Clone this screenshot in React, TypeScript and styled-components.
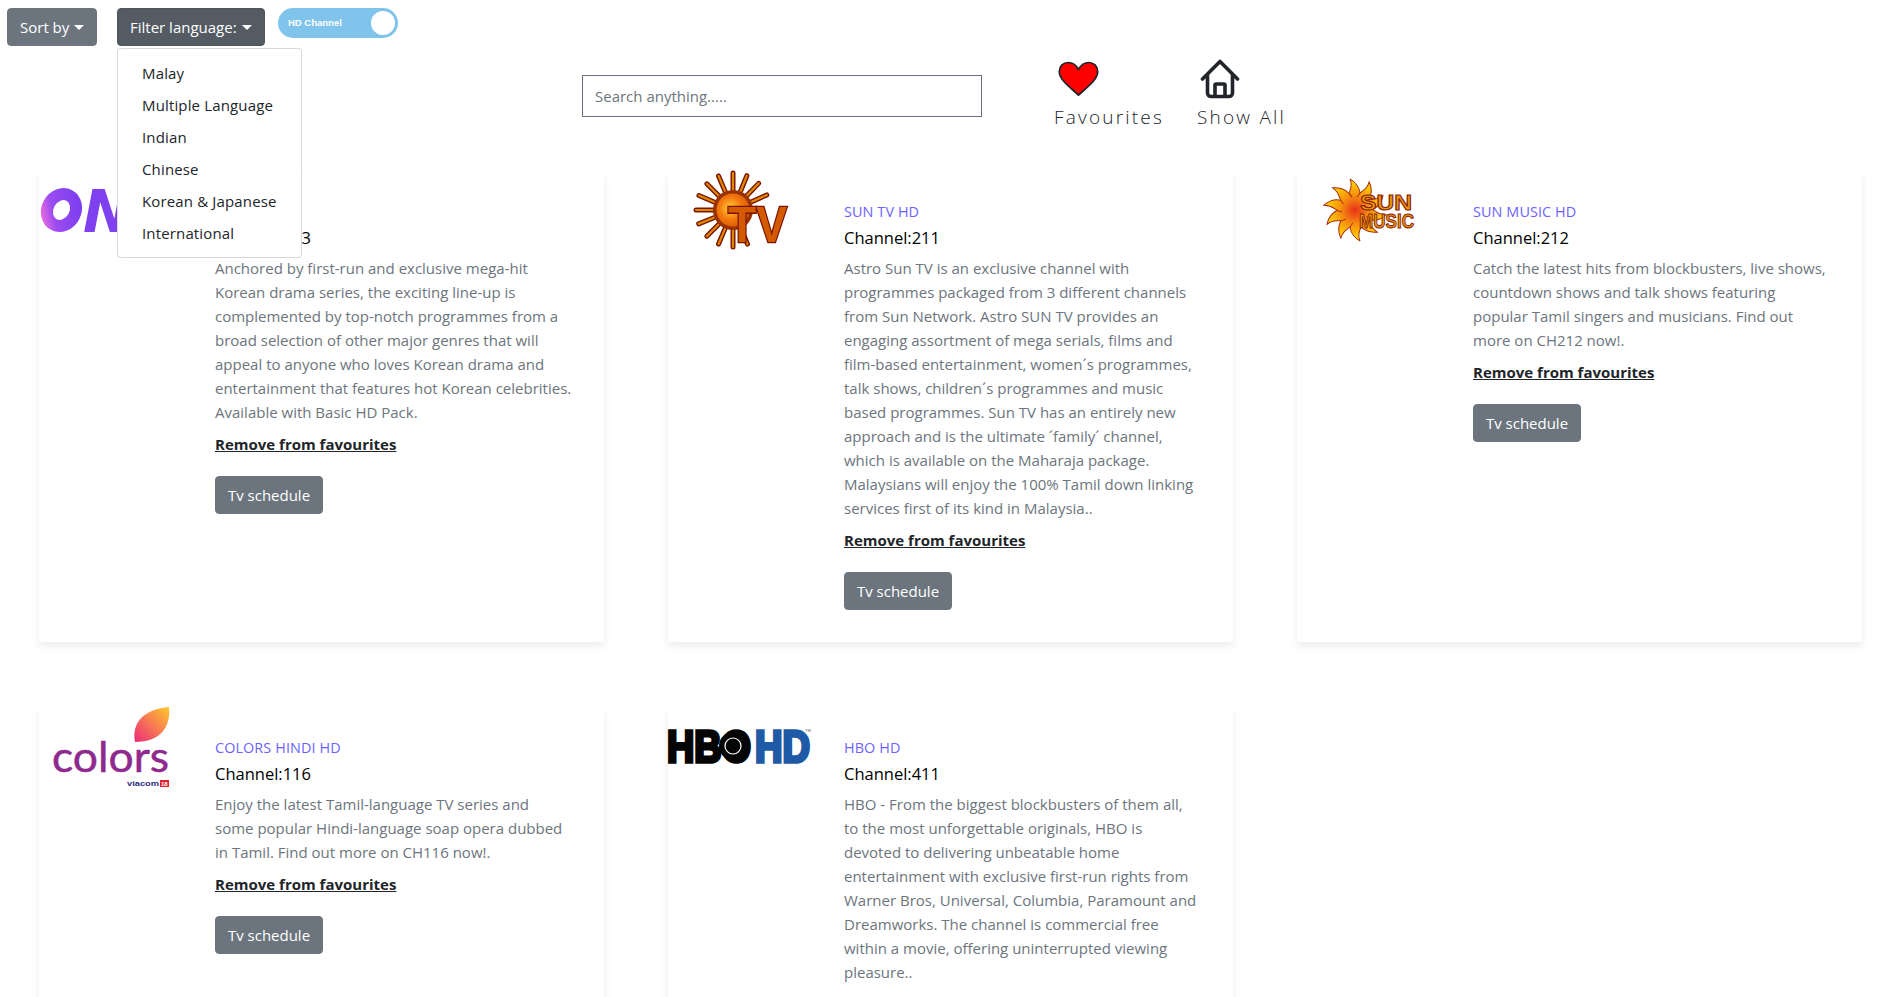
import React from 'react';
import styled, { createGlobalStyle } from 'styled-components';

const GlobalStyle = createGlobalStyle`
  html, body {
    margin: 0;
    background: #fff;
    color: #212529;
    font-family: "Open Sans", "Noto Sans", sans-serif;
    font-size: 15px;
    line-height: 24px;
  }
  html::-webkit-scrollbar { display: none; }
  * { box-sizing: border-box; }
`;

const Toolbar = styled.div`
  display: flex;
  align-items: flex-start;
  padding: 8px 7px 0;
`;

const DropWrap = styled.div`
  position: relative;
  margin-left: 20px;
`;

const DropButton = styled.button<{ $active?: boolean }>`
  display: flex;
  align-items: center;
  justify-content: space-between;
  width: ${(p) => (p.$active ? '148px' : '90px')};
  height: 38px;
  padding: 0 12px;
  border: 1px solid ${(p) => (p.$active ? '#4e555b' : '#6c757d')};
  border-radius: 4px;
  background: ${(p) => (p.$active ? '#545b62' : '#6c757d')};
  color: #fff;
  font: inherit;

  &::after {
    content: '';
    border-top: 5px solid #fff;
    border-left: 5px solid transparent;
    border-right: 5px solid transparent;
  }
`;

const Menu = styled.div`
  position: absolute;
  z-index: 5;
  top: 40px;
  left: 0;
  width: 185px;
  padding: 8px 0;
  background: #fff;
  border: 1px solid rgba(0, 0, 0, 0.15);
  border-radius: 4px;
`;

const MenuItem = styled.div`
  padding: 4px 24px;
  color: #212529;
  letter-spacing: 0.15px;
  white-space: nowrap;
`;

const Switch = styled.div`
  display: flex;
  align-items: center;
  justify-content: space-between;
  width: 120px;
  height: 30px;
  margin-left: 13px;
  padding: 0 3px 0 10px;
  border-radius: 15px;
  background: #80c4eb;
  color: #fff;
  font-family: "Liberation Sans", sans-serif;
  font-size: 9.5px;
  font-weight: 700;

  &::after {
    content: '';
    width: 24px;
    height: 24px;
    border-radius: 50%;
    background: #fff;
  }
`;

const Header = styled.div`
  display: flex;
  align-items: flex-start;
  height: 126px;
  padding: 12px 0 0 582px;
`;

const Search = styled.input`
  width: 400px;
  height: 42px;
  margin-top: 17px;
  padding: 0 12px;
  border: 1px solid #6a6f80;
  outline: none;
  font: inherit;

  &::placeholder {
    color: #6c757d;
    opacity: 1;
  }
`;

const NavItems = styled.div`
  display: flex;
  gap: 33px;
  margin-left: 72px;
`;

const NavItem = styled.div<{ $iconInset: number }>`
  display: flex;
  flex-direction: column;
  align-items: flex-start;

  svg {
    display: block;
    margin-left: ${(p) => p.$iconInset}px;
  }
`;

const IconSlot = styled.div`
  display: flex;
  align-items: center;
  height: 42px;
`;

const NavLabel = styled.div`
  margin-top: 4px;
  font-size: 19px;
  font-weight: 300;
  line-height: 26px;
  letter-spacing: 2.2px;
  color: #212529;
`;

const Grid = styled.div`
  display: grid;
  grid-template-columns: repeat(3, 565px);
  column-gap: 64px;
  row-gap: 66px;
  padding-left: 39px;
`;

const Card = styled.div`
  display: flex;
  background: #fff;
  box-shadow: 0 4px 8px rgba(0, 0, 0, 0.08);
`;

const Logo = styled.svg`
  display: block;
  flex: none;
  width: 144px;
  height: 100px;
  overflow: visible;
`;

const Body = styled.div`
  flex: 1;
  padding: 31px 0 32px 32px;
`;

const Title = styled.div`
  font-size: 14.4px;
  font-weight: 500;
  line-height: 18px;
  letter-spacing: 0.1px;
  color: #6c63ff;
`;

const ChannelNo = styled.div`
  margin-top: 6px;
  font-size: 16.5px;
  line-height: 22px;
  color: #000;
`;

const Description = styled.p`
  margin: 7px 0 0;
  color: #6c757d;
  white-space: nowrap;
`;

const RemoveLink = styled.a`
  display: block;
  margin-top: 8px;
  font-weight: 700;
  color: #212529;
  text-decoration: underline;
`;

const ScheduleButton = styled.button`
  display: block;
  width: 108px;
  height: 38px;
  margin-top: 20px;
  padding: 0;
  border: 1px solid #6c757d;
  border-radius: 4px;
  background: #6c757d;
  color: #fff;
  font: inherit;
`;

const OneLogo = () => (
  <Logo viewBox="0 0 144 100">
    <defs>
      <linearGradient id="oneFill" x1="0" y1="1" x2="1" y2="0">
        <stop offset="0" stopColor="#e86be0" />
        <stop offset="0.3" stopColor="#9a4cf0" />
        <stop offset="1" stopColor="#7a3df0" />
      </linearGradient>
    </defs>
    <ellipse cx="22.5" cy="38" rx="14" ry="16.5" fill="none" stroke="url(#oneFill)" strokeWidth="12" transform="rotate(28 22.5 38)" />
    <text x="44" y="60" fontFamily="'DejaVu Sans', sans-serif" fontWeight="700" fontStyle="italic" fontSize="58" fill="#7f40f0">N</text>
  </Logo>
);

const SunTvLogo = () => {
  const rays = [-24, -46, -68, -90, -113, -135, -157, 180, 158, 135, 113, 90, 67];
  return (
    <Logo viewBox="0 0 144 100">
      <defs>
        <radialGradient id="sunDisc" cx="0.42" cy="0.45" r="0.6">
          <stop offset="0" stopColor="#ffd23c" />
          <stop offset="0.55" stopColor="#f57a10" />
          <stop offset="1" stopColor="#d85a00" />
        </radialGradient>
      </defs>
      <g transform="translate(65 38)">
        {rays.map((a) => {
          const r = (a * Math.PI) / 180;
          const x1 = Math.cos(r) * 18;
          const y1 = Math.sin(r) * 18;
          const x2 = Math.cos(r) * 37;
          const y2 = Math.sin(r) * 37;
          return (
            <g key={a}>
              <line x1={x1} y1={y1} x2={x2} y2={y2} stroke="#7a1200" strokeWidth="5" strokeLinecap="round" />
              <line x1={x1} y1={y1} x2={x2} y2={y2} stroke="#dd8a00" strokeWidth="2.2" strokeLinecap="round" />
            </g>
          );
        })}
        <circle r="20" fill="#9a3200" />
        <circle r="16.5" fill="url(#sunDisc)" />
      </g>
      <text x="60" y="70" fontFamily="'Liberation Sans', sans-serif" fontWeight="700" fontSize="50" textLength="59" lengthAdjust="spacingAndGlyphs" fill="#d45a00" stroke="#7a1200" strokeWidth="2.6" paintOrder="stroke">TV</text>
    </Logo>
  );
};

const SunMusicLogo = () => {
  const rays = [0, 36, 72, 108, 144, 180, 216, 252, 288, 324];
  return (
    <Logo viewBox="0 0 144 100">
      <defs>
        <radialGradient id="musicSun" gradientUnits="userSpaceOnUse" cx="0" cy="0" r="30">
          <stop offset="0" stopColor="#e8301a" />
          <stop offset="0.45" stopColor="#f58a10" />
          <stop offset="1" stopColor="#ffd800" />
        </radialGradient>
      </defs>
      <g transform="translate(58 38)">
        {rays.map((a) => (
          <path
            key={a}
            transform={`rotate(${a})`}
            d="M-5 -10 C-9 -18 -1 -21 -5 -31 C4 -26 6 -18 5 -10 Z"
            fill="url(#musicSun)"
            stroke="#a82a10"
            strokeWidth="1"
          />
        ))}
        <circle r="13" fill="url(#musicSun)" />
      </g>
      <text x="63" y="38" fontFamily="'Liberation Sans', sans-serif" fontWeight="700" fontSize="22" textLength="52" lengthAdjust="spacingAndGlyphs" fill="#e89a00" stroke="#8a2010" strokeWidth="1.1">SUN</text>
      <text x="62" y="56" fontFamily="'Liberation Sans', sans-serif" fontWeight="700" fontSize="20" textLength="55" lengthAdjust="spacingAndGlyphs" fill="#e89a00" stroke="#8a2010" strokeWidth="1">MUSIC</text>
    </Logo>
  );
};

const ColorsLogo = () => (
  <Logo viewBox="0 0 144 100">
    <defs>
      <linearGradient id="leaf" x1="0" y1="1" x2="1" y2="0">
        <stop offset="0" stopColor="#ee2a7b" />
        <stop offset="1" stopColor="#ffc82c" />
      </linearGradient>
    </defs>
    <path d="M96 34 C92 14 106 1 130 -1 C132 18 122 34 96 34 Z" fill="url(#leaf)" />
    <text x="13" y="64" fontFamily="'Lato', sans-serif" fontSize="42" textLength="117" lengthAdjust="spacingAndGlyphs" fill="#8e2a8e" stroke="#8e2a8e" strokeWidth="0.5">colors</text>
    <text x="88" y="78" fontFamily="'Liberation Sans', sans-serif" fontWeight="700" fontSize="8" textLength="32" lengthAdjust="spacingAndGlyphs" fill="#2b2f7c">viacom</text>
    <rect x="121" y="72" width="9" height="7" fill="#e4202e" />
    <text x="122" y="78" fontFamily="'Liberation Sans', sans-serif" fontWeight="700" fontSize="6" fill="#fff">18</text>
  </Logo>
);

const HboLogo = () => (
  <Logo viewBox="0 0 144 100">
    <text x="-1" y="54" fontFamily="'Liberation Sans', sans-serif" fontWeight="700" fontSize="44" textLength="84" lengthAdjust="spacingAndGlyphs" fill="#050505" stroke="#050505" strokeWidth="3.5">HBO</text>
    <circle cx="65" cy="38" r="14" fill="#050505" />
    <circle cx="65" cy="38" r="8" fill="none" stroke="#fff" strokeWidth="1.2" />
    <text x="87" y="54" fontFamily="'Liberation Sans', sans-serif" fontWeight="700" fontSize="44" textLength="55" lengthAdjust="spacingAndGlyphs" fill="#1f5aa6" stroke="#1f5aa6" strokeWidth="3.5">HD</text>
    <text x="137" y="24" fontFamily="'Liberation Sans', sans-serif" fontSize="4" fill="#555">TM</text>
  </Logo>
);

const channels = [
  {
    name: 'ONE HD',
    no: 393,
    logo: <OneLogo />,
    lines: [
      'Anchored by first-run and exclusive mega-hit',
      'Korean drama series, the exciting line-up is',
      'complemented by top-notch programmes from a',
      'broad selection of other major genres that will',
      'appeal to anyone who loves Korean drama and',
      'entertainment that features hot Korean celebrities.',
      'Available with Basic HD Pack.',
    ],
  },
  {
    name: 'SUN TV HD',
    no: 211,
    logo: <SunTvLogo />,
    lines: [
      'Astro Sun TV is an exclusive channel with',
      'programmes packaged from 3 different channels',
      'from Sun Network. Astro SUN TV provides an',
      'engaging assortment of mega serials, films and',
      'film-based entertainment, women´s programmes,',
      'talk shows, children´s programmes and music',
      'based programmes. Sun TV has an entirely new',
      'approach and is the ultimate ´family´ channel,',
      'which is available on the Maharaja package.',
      'Malaysians will enjoy the 100% Tamil down linking',
      'services first of its kind in Malaysia..',
    ],
  },
  {
    name: 'SUN MUSIC HD',
    no: 212,
    logo: <SunMusicLogo />,
    lines: [
      'Catch the latest hits from blockbusters, live shows,',
      'countdown shows and talk shows featuring',
      'popular Tamil singers and musicians. Find out',
      'more on CH212 now!.',
    ],
  },
  {
    name: 'COLORS HINDI HD',
    no: 116,
    logo: <ColorsLogo />,
    lines: [
      'Enjoy the latest Tamil-language TV series and',
      'some popular Hindi-language soap opera dubbed',
      'in Tamil. Find out more on CH116 now!.',
    ],
  },
  {
    name: 'HBO HD',
    no: 411,
    logo: <HboLogo />,
    lines: [
      'HBO - From the biggest blockbusters of them all,',
      'to the most unforgettable originals, HBO is',
      'devoted to delivering unbeatable home',
      'entertainment with exclusive first-run rights from',
      'Warner Bros, Universal, Columbia, Paramount and',
      'Dreamworks. The channel is commercial free',
      'within a movie, offering uninterrupted viewing',
      'pleasure..',
    ],
  },
];

const languages = ['Malay', 'Multiple Language', 'Indian', 'Chinese', 'Korean & Japanese', 'International'];

export default function App() {
  return (
    <>
      <GlobalStyle />
      <Toolbar>
        <DropButton>Sort by</DropButton>
        <DropWrap>
          <DropButton $active>Filter language:</DropButton>
          <Menu>
            {languages.map((l) => (
              <MenuItem key={l}>{l}</MenuItem>
            ))}
          </Menu>
        </DropWrap>
        <Switch>HD Channel</Switch>
      </Toolbar>
      <Header>
        <Search placeholder="Search anything....." />
        <NavItems>
          <NavItem $iconInset={4}>
            <IconSlot>
              <svg width="41" height="36" viewBox="0 0 38 33">
                <path
                  d="M19 31.5 C10 23 1.2 17 1.2 9.5 C1.2 4.5 5 1.2 9.5 1.2 C13.5 1.2 17 4 19 7.5 C21 4 24.5 1.2 28.5 1.2 C33 1.2 36.8 4.5 36.8 9.5 C36.8 17 28 23 19 31.5 Z"
                  fill="#f00"
                  stroke="#212529"
                  strokeWidth="1.6"
                />
              </svg>
            </IconSlot>
            <NavLabel>Favourites</NavLabel>
          </NavItem>
          <NavItem $iconInset={3}>
            <IconSlot>
              <svg width="40" height="40" viewBox="0 0 40 40" fill="none" stroke="#212529" strokeWidth="3.6" strokeLinecap="round" strokeLinejoin="round">
                <path d="M2.5 20 L20 2.5 L37.5 20" />
                <path d="M7.5 16 V34 a3.5 3.5 0 0 0 3.5 3.5 H29 a3.5 3.5 0 0 0 3.5 -3.5 V16" />
                <path d="M15 37 V26 a1 1 0 0 1 1 -1 H24 a1 1 0 0 1 1 1 V37" />
              </svg>
            </IconSlot>
            <NavLabel>Show All</NavLabel>
          </NavItem>
        </NavItems>
      </Header>
      <Grid>
        {channels.map((c) => (
          <Card key={c.no}>
            {c.logo}
            <Body>
              <Title>{c.name}</Title>
              <ChannelNo>Channel:{c.no}</ChannelNo>
              <Description>
                {c.lines.map((line, i) => (
                  <React.Fragment key={i}>
                    {line}
                    <br />
                  </React.Fragment>
                ))}
              </Description>
              <RemoveLink>Remove from favourites</RemoveLink>
              <ScheduleButton>Tv schedule</ScheduleButton>
            </Body>
          </Card>
        ))}
      </Grid>
    </>
  );
}
